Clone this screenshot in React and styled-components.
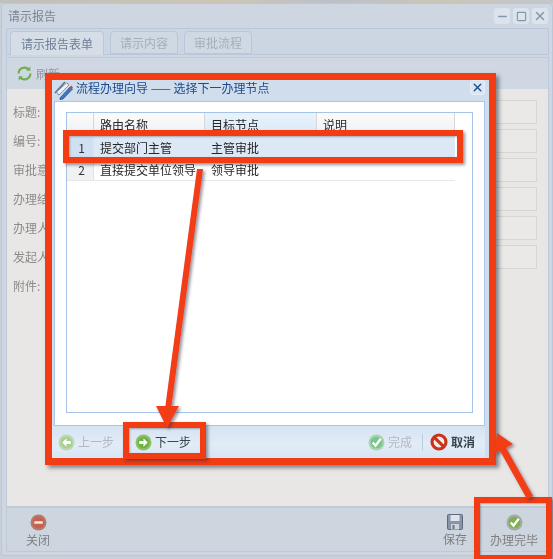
import React from 'react';
import styled, { createGlobalStyle } from 'styled-components';
import { X, Minus, Square } from 'lucide-react';

const GlobalStyle = createGlobalStyle`
  html, body {
    margin: 0;
    padding: 0;
    background: #d3d9e1;
  }

  * {
    box-sizing: border-box;
  }
`;

const Page = styled.div`
  position: relative;
  width: 553px;
  height: 559px;
  overflow: hidden;
  padding-top: 3px;
  background: #c9d0da;
  font-family: "Noto Sans CJK SC", "Liberation Sans", sans-serif;
  font-size: 12px;
  line-height: 16px;
  filter: blur(0.35px);
`;

const TopNoise = styled.div`
  position: absolute;
  top: 0;
  left: 0;
  right: 0;
  height: 3px;
  background: linear-gradient(90deg, #bfc1bd, #cbc5b4 40%, #bcc1c9 60%, #c9c6b8 80%, #c3c7cc);
`;

const Window = styled.div`
  display: flex;
  flex-direction: column;
  height: 553px;
  margin-left: 1px;
  border: 1px solid #b9c7d8;
  border-radius: 4px 4px 0 0;
  background: #cdd6e1;
`;

const WindowTitle = styled.div`
  display: flex;
  align-items: center;
  height: 24px;
  flex: none;
  padding: 0 4px 0 6px;
  color: #7b8593;
`;

const TitleText = styled.span`
  flex: 1;
`;

const WinControls = styled.div`
  display: flex;
  gap: 3px;
`;

const WinButton = styled.span`
  display: flex;
  align-items: center;
  justify-content: center;
  width: 16px;
  height: 16px;
  border-radius: 3px;
  background: #dbe3ec;
  color: #8496ab;
`;

const TabStrip = styled.div`
  display: flex;
  align-items: flex-end;
  gap: 6px;
  height: 27px;
  flex: none;
  margin: 0 3px 0 4px;
  padding-left: 3px;
  border: 1px solid #b8c8da;
  border-radius: 2px 2px 0 0;
  background: #ccd6e2;
`;

const Tab = styled.div`
  display: flex;
  align-items: center;
  justify-content: center;
  width: ${(p) => p.$width}px;
  height: ${(p) => (p.$active ? 24 : 23)}px;
  margin-bottom: ${(p) => (p.$active ? -1 : 0)}px;
  border: 1px solid #b8c8da;
  border-bottom: ${(p) => (p.$active ? 'none' : '1px solid #b8c8da')};
  border-radius: 4px 4px 0 0;
  background: ${(p) => (p.$active ? '#d5dde7' : '#cfd8e3')};
  color: ${(p) => (p.$active ? '#6f7f96' : '#a4aebb')};
`;

const Toolbar = styled.div`
  display: flex;
  align-items: center;
  gap: 3px;
  height: 32px;
  flex: none;
  margin: 2px 3px 0 4px;
  padding-left: 9px;
  border: 1px solid #bccada;
  border-bottom: none;
  background: #cfd7e2;
  color: #9099a5;
`;

const FormArea = styled.div`
  display: flex;
  flex-direction: column;
  gap: 5px;
  flex: 1;
  margin: 0 3px 0 4px;
  padding: 11px 11px 0 6px;
  border-left: 1px solid #bccada;
  border-right: 1px solid #bccada;
  background: #e9e7e5;
  color: #8b8b8b;
`;

const FormRow = styled.div`
  display: flex;
  align-items: center;
  height: 24px;
`;

const FormLabel = styled.label`
  width: 54px;
  flex: none;
`;

const FormInput = styled.div`
  flex: 1;
  height: 24px;
  border: 1px solid #d7d6d4;
  background: #ebe9e7;
`;

const Footer = styled.div`
  display: flex;
  align-items: flex-start;
  height: 46px;
  flex: none;
  margin: 0 3px 3px 4px;
  padding: 6px 4px 0 6px;
  border: 1px solid #bccada;
  border-top-width: 2px;
  background: #cdd5df;
`;

const FooterButton = styled.div`
  display: flex;
  flex-direction: column;
  align-items: center;
  gap: 1px;
  width: ${(p) => p.$width}px;
  margin-left: ${(p) => p.$gap || 0}px;
  color: #7f7f80;
`;

const Spacer = styled.div`
  flex: 1;
`;

const Dialog = styled.div`
  position: absolute;
  left: 45px;
  top: 73px;
  display: flex;
  flex-direction: column;
  width: 451px;
  height: 392px;
  border: 7px solid #f23c14;
  background: #cfdded;
  box-shadow: 3px 3px 4px rgba(40, 50, 60, 0.55);
`;

const DialogTitle = styled.div`
  display: flex;
  align-items: flex-start;
  gap: 2px;
  height: 21px;
  flex: none;
  padding: 0 4px 0 2px;
  color: #1b4a8c;
`;

const DialogTitleText = styled.span`
  flex: 1;
`;

const DialogClose = styled.span`
  display: flex;
  align-items: center;
  justify-content: center;
  width: 15px;
  height: 15px;
  border: 1px solid #e6eef8;
  border-radius: 3px;
  background: #dbe6f3;
  color: #1d4f94;
`;

const DialogBody = styled.div`
  flex: 1;
  margin: 0 4px 0 2px;
  padding: 10px 11px 12px 11px;
  border: 1px solid #a9c6e8;
  background: #fff;
`;

const GridBox = styled.div`
  height: 100%;
  border: 1px solid #a5c3e6;
  background: #fff;
`;

const GridRow = styled.div`
  display: grid;
  grid-template-columns: 27px 111px 112px 138px;
  width: 388px;
  height: ${(p) => (p.$head ? 24 : 22)}px;
  background: ${(p) => (p.$selected ? '#dde8f6' : 'transparent')};
  border-bottom: 1px solid #e6e8ec;
  color: #262626;
`;

const GridCell = styled.div`
  display: flex;
  align-items: center;
  padding-left: 6px;
  border-right: 1px solid ${(p) => (p.$head ? '#d4d6da' : 'transparent')};
  background: ${(p) =>
    p.$blue
      ? 'linear-gradient(#e9f3fc, #d8e8f8)'
      : p.$head
        ? 'linear-gradient(#fbfbfb, #eef0f2)'
        : 'transparent'};
`;

const RowNumber = styled.div`
  display: flex;
  align-items: center;
  justify-content: flex-end;
  padding-right: 8px;
  border-right: 1px solid #e0e2e6;
  background: ${(p) => (p.$selected ? '#cfe0f3' : '#f0f1f3')};
  color: #333;
`;

const DialogFooter = styled.div`
  display: flex;
  align-items: center;
  height: 32px;
  flex: none;
  margin-right: 4px;
  padding: 0 10px 0 6px;
  background: linear-gradient(#d6e3f2, #e2ecf7 60%, #d6e4f3);
`;

const FootAction = styled.div`
  display: flex;
  align-items: center;
  gap: 3px;
  margin-left: ${(p) => p.$gap || 0}px;
  color: ${(p) => (p.$disabled ? '#b3b9c0' : '#3a4450')};
  font-weight: ${(p) => (p.$bold ? 700 : 400)};
`;

const FootSeparator = styled.span`
  width: 1px;
  height: 16px;
  margin: 0 7px 0 10px;
  background: #b6cde6;
`;

const Annotation = styled.div`
  position: absolute;
  left: ${(p) => p.$left}px;
  top: ${(p) => p.$top}px;
  width: ${(p) => p.$width}px;
  height: ${(p) => p.$height}px;
  border: 6px solid #f23c14;
  box-shadow: 2px 2px 3px rgba(40, 50, 60, 0.5),
    inset 1px 1px 2px rgba(40, 50, 60, 0.35);
`;

const ArrowLayer = styled.svg`
  position: absolute;
  left: 0;
  top: 0;
  width: 553px;
  height: 559px;
  pointer-events: none;
`;

const RoundIcon = ({ color, rim, children, size = 17 }) => (
  <svg width={size} height={size} viewBox="0 0 16 16">
    <circle cx="8" cy="8" r="7.5" fill={rim} />
    <circle cx="8" cy="8" r="5.5" fill={color} />
    {children}
  </svg>
);

const ArrowRightIcon = ({ color, rim }) => (
  <RoundIcon color={color} rim={rim}>
    <path d="M4 6.6h4V4l4 4-4 4V9.4H4z" fill="#fff" />
  </RoundIcon>
);

const ArrowLeftIcon = ({ color, rim }) => (
  <RoundIcon color={color} rim={rim}>
    <path d="M12 6.6H8V4L4 8l4 4V9.4h4z" fill="#fff" />
  </RoundIcon>
);

const CheckIcon = ({ color, rim, size }) => (
  <RoundIcon color={color} rim={rim} size={size}>
    <path d="M4.5 8l2.6 3L12 4.5" fill="none" stroke="#fff" strokeWidth="2.2" />
  </RoundIcon>
);

const CancelIcon = () => (
  <svg width="18" height="18" viewBox="0 0 16 16">
    <circle cx="8" cy="8" r="6.2" fill="#f4ece8" stroke="#c9341a" strokeWidth="2.8" />
    <path d="M3.8 3.8l8.4 8.4" stroke="#c9341a" strokeWidth="2.8" />
  </svg>
);

const RefreshIcon = () => (
  <svg width="17" height="17" viewBox="0 0 16 16" fill="none" stroke="#6fae55" strokeWidth="2">
    <path d="M2.5 8a5.5 5.5 0 0 1 9.5-3.8" />
    <path d="M13.5 8A5.5 5.5 0 0 1 4 11.8" />
    <path d="M13.5 1.5v4h-4z" fill="#6fae55" stroke="none" />
    <path d="M2.5 14.5v-4h4z" fill="#6fae55" stroke="none" />
  </svg>
);

const SaveIcon = () => (
  <svg width="16" height="16" viewBox="0 0 16 16">
    <rect x="0.5" y="0.5" width="15" height="15" rx="1" fill="#8a93a8" stroke="#5e6880" />
    <rect x="3.5" y="1" width="9" height="6" fill="#dfe3ea" />
    <rect x="4" y="10" width="8" height="5.5" fill="#cfd5de" />
    <rect x="5.5" y="11" width="2" height="4" fill="#6b748a" />
  </svg>
);

const PencilIcon = () => (
  <svg width="20" height="20" viewBox="0 0 20 20">
    <path d="M1 13L11 2" stroke="#59708f" strokeWidth="1.6" />
    <path d="M4 15L14 3" stroke="#8aa0bc" strokeWidth="1.6" />
    <path d="M2.5 12L12.5 3l2.5 2-10 10z" fill="#eef3f9" stroke="#5f7797" strokeWidth="0.7" />
    <path d="M6 18l10-11 2.5 2L9 19l-3 0.5z" fill="#3f78c4" stroke="#27497e" strokeWidth="0.7" />
    <path d="M15.5 7.5l1.5-2 2 1.8-1.3 2z" fill="#d8433a" />
  </svg>
);

const Arrows = () => (
  <ArrowLayer viewBox="0 0 553 559">
    <defs>
      <filter id="arrowShadow" x="-30%" y="-30%" width="160%" height="160%">
        <feDropShadow dx="2" dy="2" stdDeviation="1.5" floodColor="#283240" floodOpacity="0.5" />
      </filter>
    </defs>
    <g filter="url(#arrowShadow)" fill="#f23c14">
      <path d="M197 169h6l-32 240h-6z" />
      <path d="M156 406h23l-12 22z" />
      <path d="M527 499l6-3-28-50-6 3z" />
      <path d="M497 433l16 11-19 10z" />
    </g>
  </ArrowLayer>
);

const fields = ['标题:', '编号:', '审批意见', '办理结果', '办理人', '发起人'];

const App = () => {
  return (
    <Page>
      <GlobalStyle />
      <TopNoise />
      <Window>
        <WindowTitle>
          <TitleText>请示报告</TitleText>
          <WinControls>
            <WinButton><Minus size={13} strokeWidth={2.5} /></WinButton>
            <WinButton><Square size={11} strokeWidth={2.5} /></WinButton>
            <WinButton><X size={14} strokeWidth={2.5} /></WinButton>
          </WinControls>
        </WindowTitle>
        <TabStrip>
          <Tab $active $width={94}>请示报告表单</Tab>
          <Tab $width={68}>请示内容</Tab>
          <Tab $width={68}>审批流程</Tab>
        </TabStrip>
        <Toolbar>
          <RefreshIcon />
          <span>刷新</span>
        </Toolbar>
        <FormArea>
          {fields.map((label) => (
            <FormRow key={label}>
              <FormLabel>{label}</FormLabel>
              <FormInput />
            </FormRow>
          ))}
          <FormRow>
            <FormLabel>附件:</FormLabel>
          </FormRow>
        </FormArea>
        <Footer>
          <FooterButton $width={50}>
            <RoundIcon color="#c9604e" rim="#b5796e" size={17}>
              <rect x="4" y="6.8" width="8" height="2.4" fill="#efe4e0" />
            </RoundIcon>
            关闭
          </FooterButton>
          <Spacer />
          <FooterButton $width={30}>
            <SaveIcon />
            保存
          </FooterButton>
          <FooterButton $width={60} $gap={14}>
            <CheckIcon color="#7fb04f" rim="#a5aaa8" size={17} />
            办理完毕
          </FooterButton>
        </Footer>
      </Window>

      <Dialog>
        <DialogTitle>
          <PencilIcon />
          <DialogTitleText>流程办理向导 —— 选择下一办理节点</DialogTitleText>
          <DialogClose><X size={13} strokeWidth={2.5} /></DialogClose>
        </DialogTitle>
        <DialogBody>
          <GridBox>
            <GridRow $head>
              <GridCell $head />
              <GridCell $head>路由名称</GridCell>
              <GridCell $head $blue>目标节点</GridCell>
              <GridCell $head>说明</GridCell>
            </GridRow>
            <GridRow $selected>
              <RowNumber $selected>1</RowNumber>
              <GridCell>提交部门主管</GridCell>
              <GridCell>主管审批</GridCell>
              <GridCell />
            </GridRow>
            <GridRow>
              <RowNumber>2</RowNumber>
              <GridCell>直接提交单位领导</GridCell>
              <GridCell>领导审批</GridCell>
              <GridCell />
            </GridRow>
          </GridBox>
        </DialogBody>
        <DialogFooter>
          <FootAction $disabled>
            <ArrowLeftIcon color="#a6d08d" rim="#bcd8ae" />
            上一步
          </FootAction>
          <FootAction $gap={21}>
            <ArrowRightIcon color="#6cb33f" rim="#8cc06c" />
            下一步
          </FootAction>
          <Spacer />
          <FootAction $disabled>
            <CheckIcon color="#7cc58a" rim="#a6d3b0" />
            完成
          </FootAction>
          <FootSeparator />
          <FootAction $bold>
            <CancelIcon />
            取消
          </FootAction>
        </DialogFooter>
      </Dialog>

      <Annotation $left={63} $top={130} $width={400} $height={33} />
      <Annotation $left={123} $top={422} $width={83} $height={37} />
      <Annotation $left={474} $top={497} $width={78} $height={64} />
      <Arrows />
    </Page>
  );
};

export default App;
